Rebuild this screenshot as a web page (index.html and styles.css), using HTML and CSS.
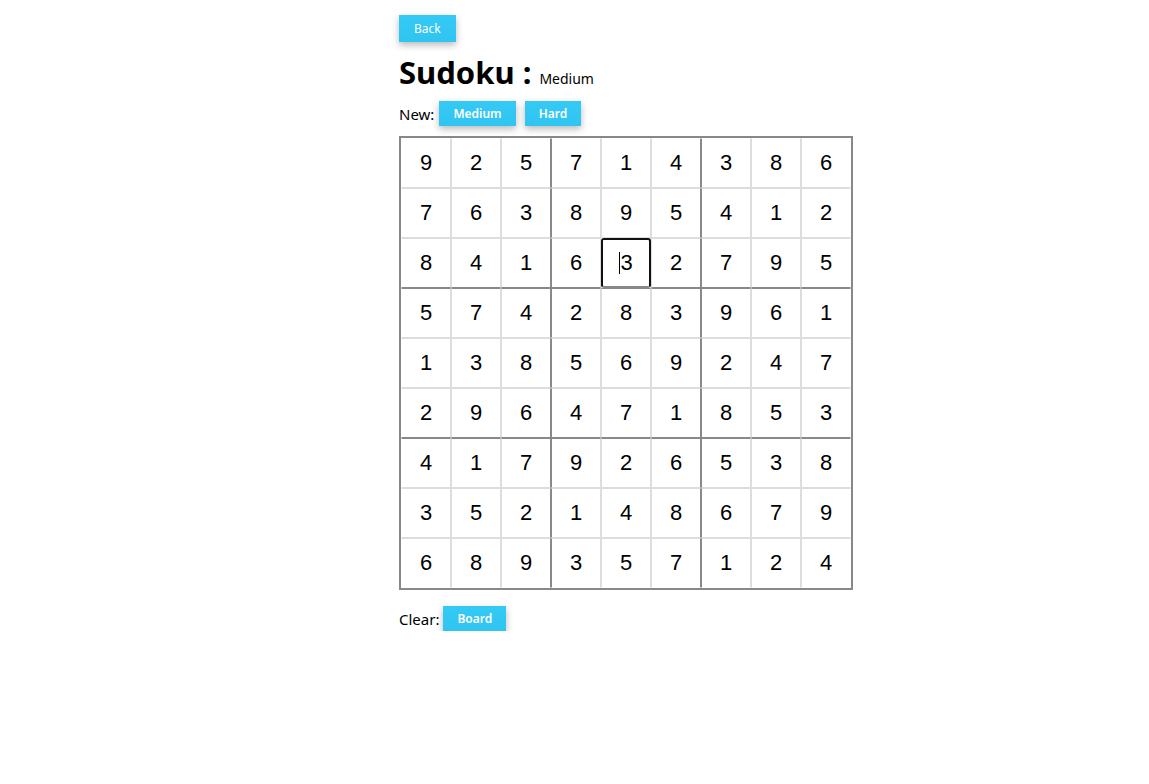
FILE: index.html
```html
<!DOCTYPE html>
<html>
<head>
<meta charset="utf-8">
<title>Sudoku</title>
<link rel="stylesheet" href="styles.css">
</head>
<body>
<div class="page">
  <div class="row"><button class="btn btn-back">Back</button></div>
  <h1 class="title">Sudoku : <span class="level">Medium</span></h1>
  <div class="row new-row"><span class="label">New:</span><button class="btn">Medium</button><button class="btn">Hard</button></div>
  <div class="board">
    <div class="cell">9</div><div class="cell">2</div><div class="cell">5</div><div class="cell">7</div><div class="cell">1</div><div class="cell">4</div><div class="cell">3</div><div class="cell">8</div><div class="cell">6</div>
    <div class="cell">7</div><div class="cell">6</div><div class="cell">3</div><div class="cell">8</div><div class="cell">9</div><div class="cell">5</div><div class="cell">4</div><div class="cell">1</div><div class="cell">2</div>
    <div class="cell">8</div><div class="cell">4</div><div class="cell">1</div><div class="cell">6</div><div class="cell focused"><span class="caret"></span>3</div><div class="cell">2</div><div class="cell">7</div><div class="cell">9</div><div class="cell">5</div>
    <div class="cell">5</div><div class="cell">7</div><div class="cell">4</div><div class="cell">2</div><div class="cell">8</div><div class="cell">3</div><div class="cell">9</div><div class="cell">6</div><div class="cell">1</div>
    <div class="cell">1</div><div class="cell">3</div><div class="cell">8</div><div class="cell">5</div><div class="cell">6</div><div class="cell">9</div><div class="cell">2</div><div class="cell">4</div><div class="cell">7</div>
    <div class="cell">2</div><div class="cell">9</div><div class="cell">6</div><div class="cell">4</div><div class="cell">7</div><div class="cell">1</div><div class="cell">8</div><div class="cell">5</div><div class="cell">3</div>
    <div class="cell">4</div><div class="cell">1</div><div class="cell">7</div><div class="cell">9</div><div class="cell">2</div><div class="cell">6</div><div class="cell">5</div><div class="cell">3</div><div class="cell">8</div>
    <div class="cell">3</div><div class="cell">5</div><div class="cell">2</div><div class="cell">1</div><div class="cell">4</div><div class="cell">8</div><div class="cell">6</div><div class="cell">7</div><div class="cell">9</div>
    <div class="cell">6</div><div class="cell">8</div><div class="cell">9</div><div class="cell">3</div><div class="cell">5</div><div class="cell">7</div><div class="cell">1</div><div class="cell">2</div><div class="cell">4</div>
  </div>
  <div class="row clear-row"><span class="label">Clear:</span><button class="btn">Board</button></div>
</div>
</body>
</html>
```
FILE: styles.css
```css
html, body {
  margin: 0;
  padding: 0;
  background: #fff;
}
body {
  font-family: "Noto Sans", "Open Sans", sans-serif;
  color: #000;
}
.page {
  width: 351px;
  margin: 0 auto;
  padding-top: 15px;
  display: flex;
  flex-direction: column;
  align-items: flex-start;
}
.row {
  display: flex;
  align-items: center;
}
.btn {
  font-family: "Noto Sans", "Open Sans", sans-serif;
  font-size: 12px;
  font-weight: 600;
  color: #fff;
  background: linear-gradient(to bottom, #35c9f6, #30c4f0);
  border: none;
  border-radius: 0;
  height: 25px;
  padding: 0 14px;
  box-shadow: 0 3px 7px rgba(0, 0, 0, 0.28);
  cursor: pointer;
}
.btn-back {
  height: 27px;
  padding: 0 15px;
  font-weight: 400;
}
.title {
  margin: 10px 0 0 0;
  font-size: 31px;
  font-weight: 700;
  line-height: 40px;
  white-space: nowrap;
}
.level {
  font-size: 14px;
  font-weight: 400;
}
.new-row {
  margin-top: 2px;
  gap: 9px;
}
.new-row .label {
  margin-right: -4px;
}
.label {
  font-size: 15px;
}
.board {
  margin-top: 10px;
  display: grid;
  grid-template-columns: repeat(9, 50px);
  grid-auto-rows: 50px;
  border: 2px solid #888;
  width: max-content;
}
.cell {
  box-sizing: border-box;
  border: 1px solid #ddd;
  display: flex;
  align-items: center;
  justify-content: center;
  font-family: "Liberation Sans", Arial, sans-serif;
  font-size: 22px;
  color: #000;
  position: relative;
}
.cell:nth-child(9n+1) { border-left-color: transparent; }
.cell:nth-child(9n) { border-right-color: transparent; }
.cell:nth-child(-n+9) { border-top-color: transparent; }
.cell:nth-child(n+73) { border-bottom-color: transparent; }
.cell:nth-child(9n+3), .cell:nth-child(9n+6) { border-right-color: #888; }
.cell:nth-child(9n+4), .cell:nth-child(9n+7) { border-left-color: #888; }
.cell:nth-child(n+19):nth-child(-n+27),
.cell:nth-child(n+46):nth-child(-n+54) { border-bottom-color: #888; }
.cell:nth-child(n+28):nth-child(-n+36),
.cell:nth-child(n+55):nth-child(-n+63) { border-top-color: #888; }
.cell.focused {
  border: 2px solid #111;
  border-radius: 3px;
}
.caret {
  display: inline-block;
  width: 1px;
  height: 22px;
  background: #000;
}
.clear-row {
  margin-top: 16px;
  gap: 4px;
}
```
